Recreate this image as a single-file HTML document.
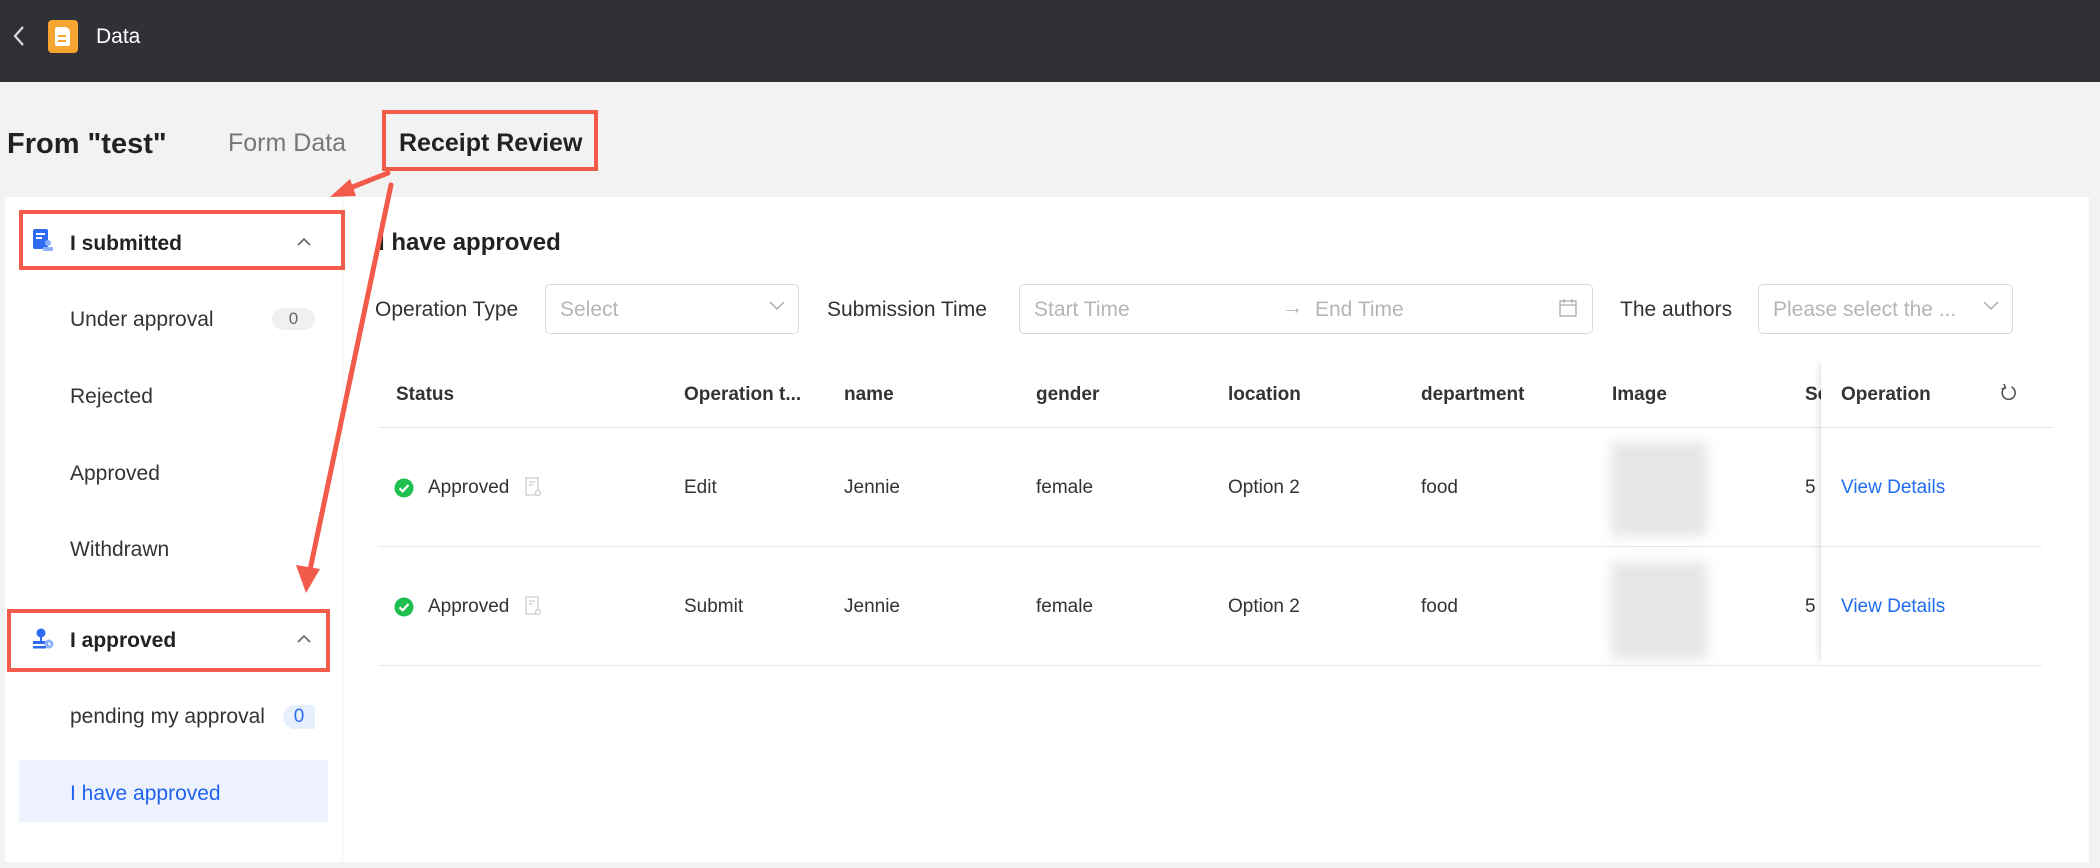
<!DOCTYPE html>
<html><head><meta charset="utf-8"><style>
*{margin:0;padding:0;box-sizing:border-box}
body{width:2100px;height:868px;background:#f2f2f2;font-family:"Liberation Sans",Arial,sans-serif;position:relative;overflow:hidden;color:#333}
.a{position:absolute;white-space:nowrap}
.t{line-height:30px;height:30px}
.hdr{left:0;top:0;width:2100px;height:82px;background:#303136}
.card{background:#fff;top:197px;height:665px}
.item{left:70px;font-size:21px;color:#333}
.lbl{font-size:21px;color:#333}
.inp{border:1px solid #d9d9d9;border-radius:5px;height:50px;top:284px;background:#fff}
.ph{font-size:21px;color:#b5b5b5}
.th{font-size:19px;color:#333;font-weight:bold;top:380px}
.td{font-size:19px;color:#333}
.line{height:1px;background:#e8e8e8}
.red{border:4px solid #f25a4a}
</style></head><body>
<div class="a hdr"></div>
<svg class="a" style="left:12px;top:24px" width="14" height="24" viewBox="0 0 14 24"><path d="M11 3 L3 12 L11 21" fill="none" stroke="#ddd" stroke-width="2.2"/></svg>
<div class="a" style="left:48px;top:20px;width:30px;height:33px;background:#f7a531;border-radius:4px"></div>
<div class="a" style="left:55px;top:27px;width:15px;height:19px;background:#fff;border-radius:2px 5px 2px 2px"></div>
<div class="a" style="left:58px;top:35px;width:8px;height:2px;background:#f7a531"></div>
<div class="a" style="left:58px;top:40px;width:8px;height:2px;background:#f7a531"></div>
<div class="a t" style="left:96px;top:22px;font-size:21px;color:#fff">Data</div>

<div class="a" style="left:7px;top:126px;font-size:29px;font-weight:bold;color:#222;line-height:36px">From "test"</div>
<div class="a" style="left:228px;top:127px;font-size:25px;color:#777;line-height:32px">Form Data</div>
<div class="a" style="left:399px;top:127px;font-size:25px;font-weight:bold;color:#222;line-height:32px">Receipt Review</div>
<div class="a red" style="left:382px;top:110px;width:216px;height:61px"></div>

<div class="a card" style="left:5px;width:337px"></div>
<div class="a card" style="left:343px;width:1746px"></div>

<!-- left -->
<div class="a red" style="left:19px;top:210px;width:326px;height:60px"></div>
<svg class="a" style="left:32px;top:228px" width="22" height="24" viewBox="0 0 22 24"><rect x="1" y="1" width="15" height="20" rx="2" fill="#2e6bf2"/><rect x="4" y="5" width="9" height="2" fill="#fff"/><rect x="4" y="9" width="6" height="2" fill="#fff"/><circle cx="16" cy="15" r="3" fill="#8db0fa"/><rect x="11" y="19" width="10" height="4" rx="1" fill="#8db0fa"/></svg>
<div class="a t" style="left:70px;top:229px;font-size:21px;font-weight:bold;color:#222">I submitted</div>
<svg class="a" style="left:296px;top:236px" width="16" height="12"><path d="M2 9 L8 3 L14 9" fill="none" stroke="#666" stroke-width="1.6"/></svg>
<div class="a t item" style="top:305px">Under approval</div>
<div class="a" style="left:272px;top:308px;width:43px;height:22px;border-radius:11px;background:#f0f0f0;font-size:17px;color:#666;text-align:center;line-height:22px">0</div>
<div class="a t item" style="top:382px">Rejected</div>
<div class="a t item" style="top:459px">Approved</div>
<div class="a t item" style="top:535px">Withdrawn</div>

<div class="a red" style="left:7px;top:609px;width:323px;height:63px"></div>
<svg class="a" style="left:31px;top:627px" width="24" height="24" viewBox="0 0 24 24"><circle cx="10" cy="6" r="4.5" fill="#2e6bf2"/><rect x="9" y="9" width="2" height="5" fill="#2e6bf2"/><rect x="2" y="14" width="13" height="3" fill="#2e6bf2"/><rect x="2" y="19" width="13" height="2.5" fill="#2e6bf2"/><circle cx="18" cy="17" r="4.5" fill="#8db0fa"/><path d="M18 15v2.5h2" stroke="#fff" stroke-width="1.2" fill="none"/></svg>
<div class="a t" style="left:70px;top:626px;font-size:21px;font-weight:bold;color:#222">I approved</div>
<svg class="a" style="left:296px;top:633px" width="16" height="12"><path d="M2 9 L8 3 L14 9" fill="none" stroke="#666" stroke-width="1.6"/></svg>
<div class="a t item" style="top:702px">pending my approval</div>
<div class="a" style="left:283px;top:705px;width:32px;height:24px;border-radius:12px 0 0 12px;background:#e8f0fe;font-size:19px;color:#2e6bf2;text-align:center;line-height:24px">0</div>
<div class="a" style="left:19px;top:760px;width:309px;height:62px;background:#edf2fe"></div>
<div class="a t item" style="top:779px;color:#1f63f0">I have approved</div>

<!-- main -->
<div class="a" style="left:378px;top:228px;font-size:24px;font-weight:bold;color:#222;line-height:30px">I have approved</div>
<div class="a t lbl" style="left:375px;top:295px">Operation Type</div>
<div class="a inp" style="left:545px;width:254px"></div>
<div class="a t ph" style="left:560px;top:295px">Select</div>
<svg class="a" style="left:768px;top:300px" width="18" height="12"><path d="M2 2 L9 9 L16 2" fill="none" stroke="#aaa" stroke-width="1.4"/></svg>
<div class="a t lbl" style="left:827px;top:295px">Submission Time</div>
<div class="a inp" style="left:1019px;width:574px"></div>
<div class="a t ph" style="left:1034px;top:295px">Start Time</div>
<div class="a t ph" style="left:1282px;top:293px">→</div>
<div class="a t ph" style="left:1315px;top:295px">End Time</div>
<svg class="a" style="left:1558px;top:297px" width="20" height="22"><rect x="2" y="4" width="16" height="15" fill="none" stroke="#aaa" stroke-width="1.3"/><path d="M2 8h16M6 2v4M14 2v4" stroke="#aaa" stroke-width="1.3"/></svg>
<div class="a t lbl" style="left:1620px;top:295px">The authors</div>
<div class="a inp" style="left:1758px;width:255px"></div>
<div class="a t ph" style="left:1773px;top:295px">Please select the ...</div>
<svg class="a" style="left:1982px;top:300px" width="18" height="12"><path d="M2 2 L9 9 L16 2" fill="none" stroke="#aaa" stroke-width="1.4"/></svg>

<div class="a th t" style="left:396px">Status</div>
<div class="a th t" style="left:684px">Operation t...</div>
<div class="a th t" style="left:844px">name</div>
<div class="a th t" style="left:1036px">gender</div>
<div class="a th t" style="left:1228px">location</div>
<div class="a th t" style="left:1421px">department</div>
<div class="a th t" style="left:1612px">Image</div>
<div class="a th t" style="left:1805px;width:16px;overflow:hidden">Sc</div>
<div class="a line" style="left:378px;top:427px;width:1675px"></div>
<div class="a line" style="left:378px;top:546px;width:1664px"></div>
<div class="a line" style="left:378px;top:665px;width:1664px"></div>

<div class="a" style="left:1611px;top:442px;width:96px;height:94px;background:#e6e6e6;filter:blur(6px)"></div>
<div class="a" style="left:1611px;top:562px;width:96px;height:97px;background:#e6e6e6;filter:blur(6px)"></div>

<svg class="a" style="left:394px;top:478px" width="20" height="20"><circle cx="10" cy="10" r="9.5" fill="#1dbf4e"/><path d="M5.5 10.3 L8.7 13.3 L14.5 7" fill="none" stroke="#fff" stroke-width="2.2"/></svg>
<div class="a t td" style="left:428px;top:473px">Approved</div>
<svg class="a" style="left:525px;top:477px" width="18" height="22"><rect x="1" y="1" width="12" height="17" fill="none" stroke="#ccc" stroke-width="1.3"/><path d="M4 5h6M4 8h4" stroke="#ccc" stroke-width="1.3"/><circle cx="13" cy="16" r="2.5" fill="#fff" stroke="#ccc" stroke-width="1.2"/></svg>
<div class="a t td" style="left:684px;top:473px">Edit</div>
<div class="a t td" style="left:844px;top:473px">Jennie</div>
<div class="a t td" style="left:1036px;top:473px">female</div>
<div class="a t td" style="left:1228px;top:473px">Option 2</div>
<div class="a t td" style="left:1421px;top:473px">food</div>
<div class="a t td" style="left:1805px;top:473px">5</div>

<svg class="a" style="left:394px;top:597px" width="20" height="20"><circle cx="10" cy="10" r="9.5" fill="#1dbf4e"/><path d="M5.5 10.3 L8.7 13.3 L14.5 7" fill="none" stroke="#fff" stroke-width="2.2"/></svg>
<div class="a t td" style="left:428px;top:592px">Approved</div>
<svg class="a" style="left:525px;top:596px" width="18" height="22"><rect x="1" y="1" width="12" height="17" fill="none" stroke="#ccc" stroke-width="1.3"/><path d="M4 5h6M4 8h4" stroke="#ccc" stroke-width="1.3"/><circle cx="13" cy="16" r="2.5" fill="#fff" stroke="#ccc" stroke-width="1.2"/></svg>
<div class="a t td" style="left:684px;top:592px">Submit</div>
<div class="a t td" style="left:844px;top:592px">Jennie</div>
<div class="a t td" style="left:1036px;top:592px">female</div>
<div class="a t td" style="left:1228px;top:592px">Option 2</div>
<div class="a t td" style="left:1421px;top:592px">food</div>
<div class="a t td" style="left:1805px;top:592px">5</div>

<!-- fixed column -->
<div class="a" style="left:1821px;top:359px;width:232px;height:307px;background:#fff;box-shadow:-6px 0 6px -4px rgba(0,0,0,0.12)"></div>
<div class="a line" style="left:1821px;top:427px;width:232px"></div>
<div class="a line" style="left:1821px;top:546px;width:221px"></div>
<div class="a line" style="left:1821px;top:665px;width:221px"></div>
<div class="a th t" style="left:1841px">Operation</div>
<svg class="a" style="left:1999px;top:382px" width="18" height="20"><path d="M12.5 5 A6.5 6.5 0 1 1 6 5.5" fill="none" stroke="#555" stroke-width="1.6"/><path d="M5 2 L6.5 6 L2.5 7" fill="none" stroke="#555" stroke-width="1.6"/></svg>
<div class="a t td" style="left:1841px;top:473px;color:#1f6cf2">View Details</div>
<div class="a t td" style="left:1841px;top:592px;color:#1f6cf2">View Details</div>

<!-- arrows -->
<svg class="a" style="left:0;top:0" width="2100" height="868">
<line x1="388" y1="173" x2="345" y2="190" stroke="#f25a4a" stroke-width="5" stroke-linecap="round"/>
<polygon points="330,197 350,179 356,196" fill="#f25a4a"/>
<line x1="391" y1="185" x2="310" y2="570" stroke="#f25a4a" stroke-width="5" stroke-linecap="round"/>
<polygon points="306,593 296,565 320,569" fill="#f25a4a"/>
</svg>
</body></html>
